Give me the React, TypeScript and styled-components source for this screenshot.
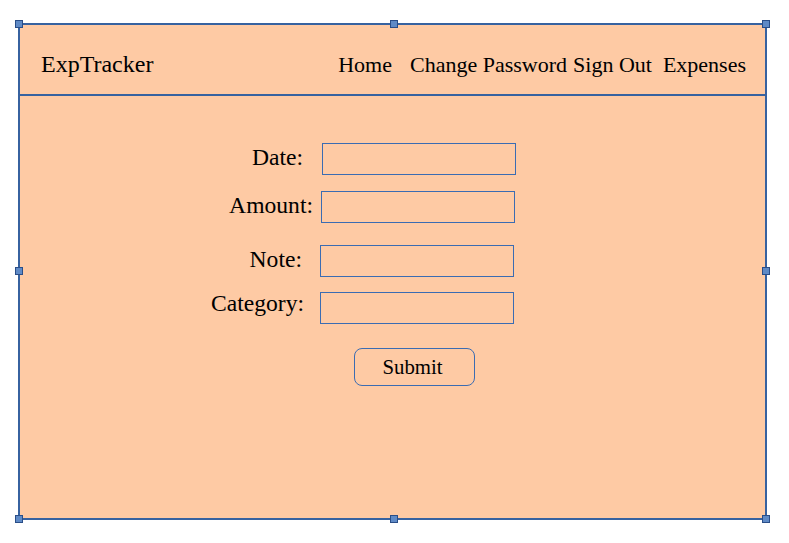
import React from "react";
import styled, { createGlobalStyle } from "styled-components";

const Global = createGlobalStyle`
  html, body { margin: 0; padding: 0; background: #ffffff; }
  body { font-family: "Liberation Serif", "Times New Roman", serif; color: #000; }
`;

const BLUE = "#3762a0";
const FILL = "#fecaa4";

const Page = styled.div`
  width: 789px;
  height: 543px;
  padding: 23px 0 0 18px;
  box-sizing: border-box;
`;

const Frame = styled.div`
  position: relative;
  width: 749px;
  height: 497px;
  box-sizing: border-box;
  border: 2px solid ${BLUE};
  background: ${FILL};
  display: flex;
  flex-direction: column;
`;

const Handle = styled.span<{ $x: number; $y: number }>`
  position: absolute;
  left: ${(p) => p.$x}px;
  top: ${(p) => p.$y}px;
  width: 8px;
  height: 8px;
  box-sizing: border-box;
  background: #5f8ac6;
  border: 1px solid #2a4e88;
`;

const Header = styled.header`
  height: 71px;
  box-sizing: border-box;
  border-bottom: 2px solid ${BLUE};
  display: flex;
  align-items: baseline;
  padding: 27px 19px 0 21px;
`;

const Brand = styled.div`
  font-size: 24px;
  line-height: 24px;
`;

const Nav = styled.nav`
  margin-left: auto;
  display: flex;
  align-items: baseline;
`;

const NavLink = styled.a<{ $gap: number }>`
  font-size: 22px;
  line-height: 24px;
  color: #000;
  text-decoration: none;
  margin-left: ${(p) => p.$gap}px;
  white-space: nowrap;
`;

const Form = styled.form`
  display: flex;
  flex-direction: column;
  padding-top: 47px;
`;

const Row = styled.div<{ $top: number; $label: number; $gap: number }>`
  display: grid;
  grid-template-columns: ${(p) => p.$label}px 194px;
  column-gap: ${(p) => p.$gap}px;
  margin-top: ${(p) => p.$top}px;
  height: 32px;
`;

const Label = styled.label<{ $lift: number }>`
  font-size: 23.6px;
  line-height: 32px;
  text-align: right;
  white-space: nowrap;
  position: relative;
  top: ${(p) => -p.$lift}px;
`;

const Field = styled.input`
  box-sizing: border-box;
  width: 194px;
  height: 32px;
  margin: 0;
  padding: 0 6px;
  border: 1px solid #3b6cb2;
  background: transparent;
  font-family: inherit;
  font-size: 18px;
  outline: none;
`;

const Submit = styled.button`
  margin: 24px 0 0 334px;
  width: 121px;
  height: 38px;
  box-sizing: border-box;
  border: 1px solid #3b6cb2;
  border-radius: 8px;
  background: transparent;
  font-family: "Liberation Serif", "Times New Roman", serif;
  font-size: 20.8px;
  color: #000;
  padding: 0 4px 0 0;
  line-height: 36px;
`;

const rows = [
  { name: "Date:", top: 0, label: 283, gap: 19, lift: 2 },
  { name: "Amount:", top: 16, label: 293, gap: 8, lift: 2 },
  { name: "Note:", top: 22, label: 282, gap: 18, lift: 2 },
  { name: "Category:", top: 15, label: 284, gap: 16, lift: 5 },
];

const handles: Array<[number, number]> = [
  [-5, -5],
  [370, -5],
  [742, -5],
  [-5, 242],
  [742, 242],
  [-5, 490],
  [370, 490],
  [742, 490],
];

export default function App() {
  return (
    <Page>
      <Global />
      <Frame>
        <Header>
          <Brand>ExpTracker</Brand>
          <Nav>
            <NavLink $gap={0} href="#">Home</NavLink>
            <NavLink $gap={18} href="#">Change Password</NavLink>
            <NavLink $gap={6} href="#">Sign Out</NavLink>
            <NavLink $gap={11} href="#">Expenses</NavLink>
          </Nav>
        </Header>
        <Form onSubmit={(e) => e.preventDefault()}>
          {rows.map((r) => (
            <Row key={r.name} $top={r.top} $label={r.label} $gap={r.gap}>
              <Label $lift={r.lift}>{r.name}</Label>
              <Field type="text" />
            </Row>
          ))}
          <Submit type="submit">Submit</Submit>
        </Form>
        {handles.map(([x, y], i) => (
          <Handle key={i} $x={x} $y={y} />
        ))}
      </Frame>
    </Page>
  );
}
